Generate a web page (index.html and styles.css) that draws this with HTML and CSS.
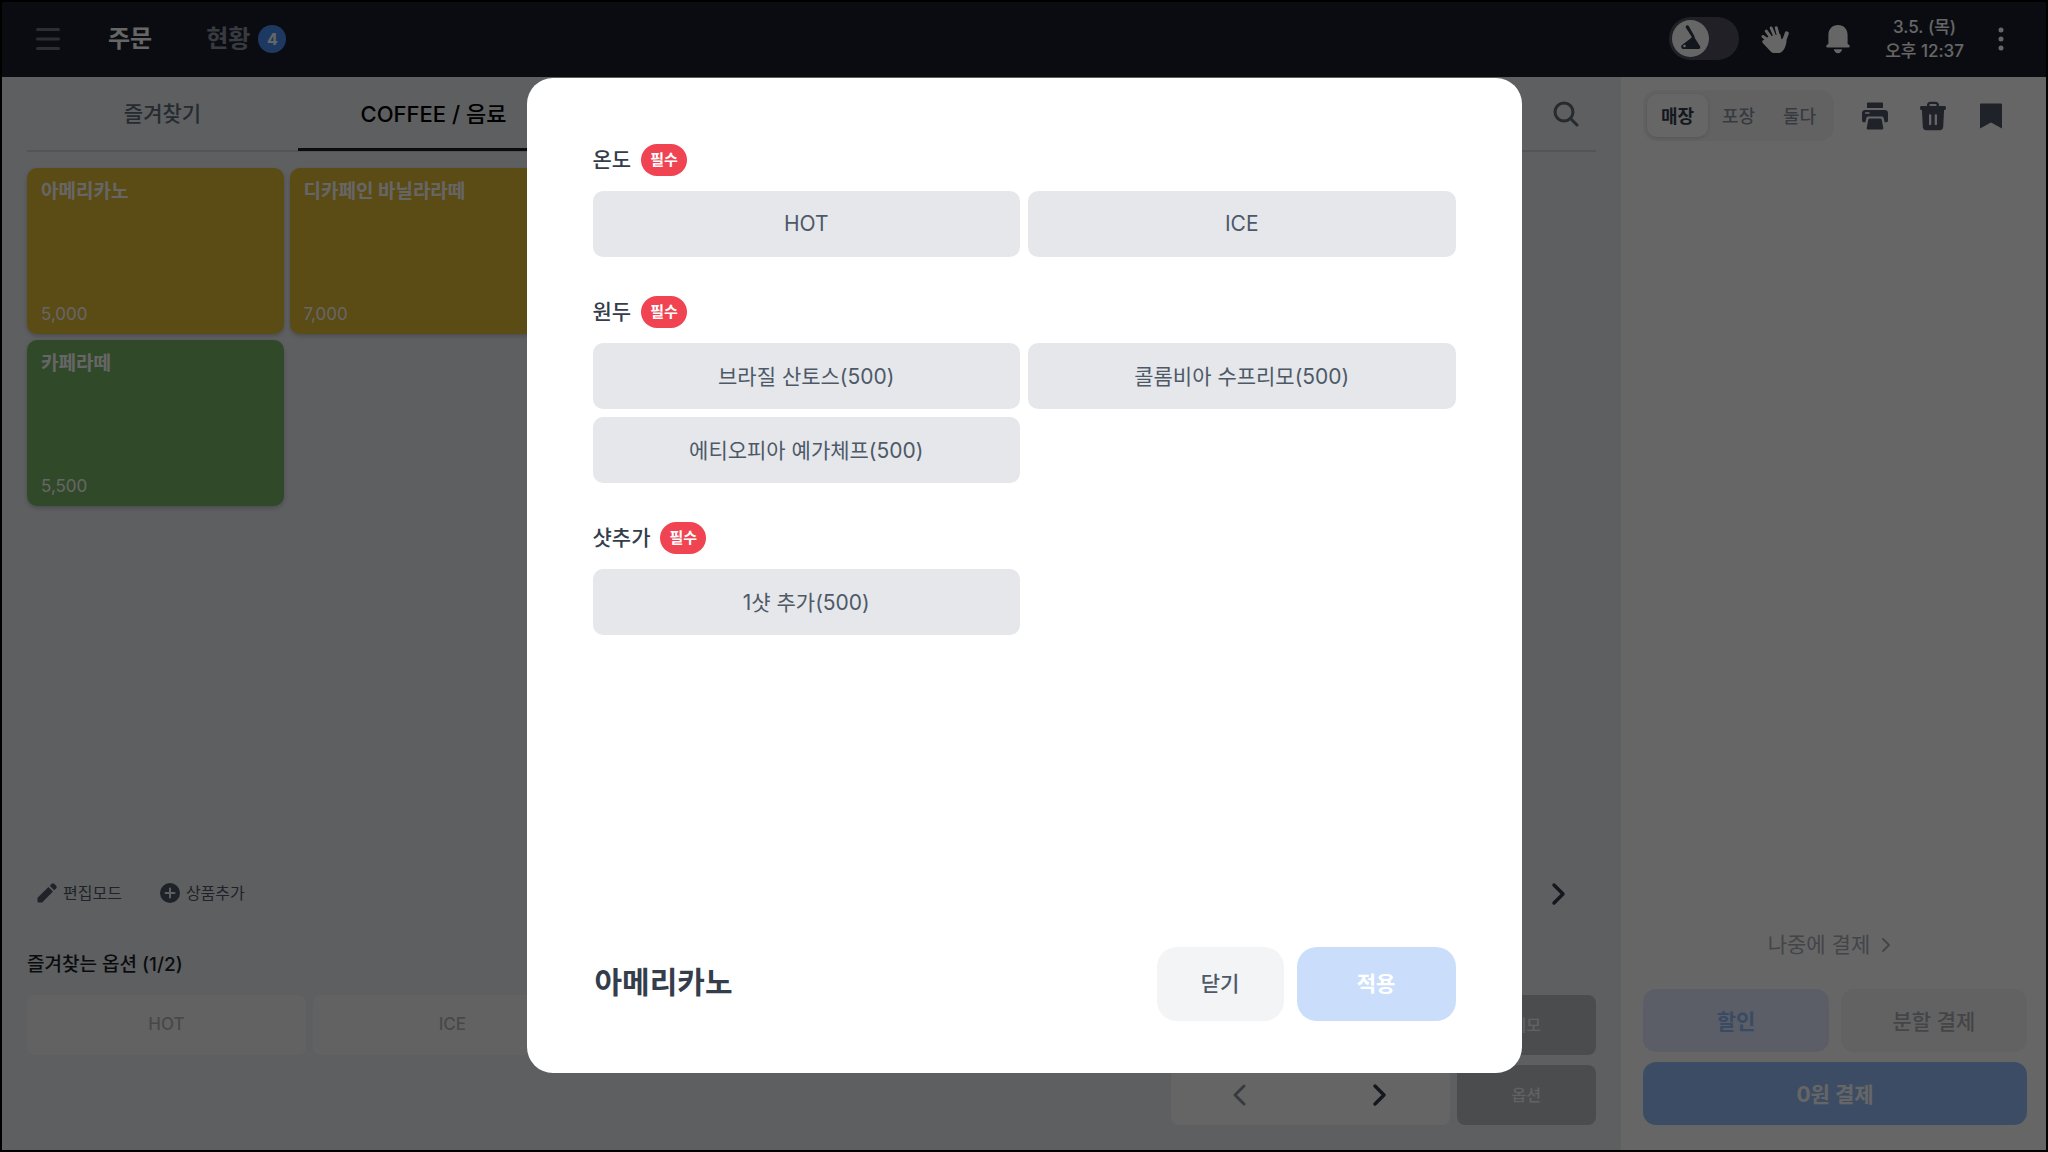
FILE: index.html
```html
<!DOCTYPE html>
<html lang="ko">
<head>
    <meta charset="UTF-8">
    <meta name="viewport" content="width=device-width, initial-scale=1.0">
    <title>주문</title>
    <link rel="stylesheet" href="styles.css">
</head>
<body>
    <div class="app">
        <header class="topbar">
            <button class="icon-button menu" aria-label="메뉴">
                <svg width="24" height="24" viewBox="0 0 24 24"><path d="M1.500 2.500h21M1.500 12h21M1.500 21.500h21" fill="none" stroke="currentColor" stroke-width="3" stroke-linecap="round"/></svg>
            </button>
            <nav class="main-nav">
                <a href="#order" class="active">주문</a>
                <a href="#status">현황 <span class="count">4</span></a>
            </nav>
            <div class="topbar-right">
                <label class="toggle">
                    <input type="checkbox" aria-label="단말기 연결">
                    <span class="knob">
                        <svg width="37" height="37" viewBox="0 0 37 37"><path d="M14.500 5.600c.9-.5 1.900-.2 2.400.6l5.400 9.700c.4.700.4 1.300.5 2l5.200 8.300c.6 1.100.3 2.800-1.200 2.800H11.600c-2.200 0-3.300-2.600-1.600-4l8.900-6.700c.7-.6.9-1.300.5-2.100l-5.500-8.400c-.5-.8-.2-1.700.6-2.200z" fill="#2f3a49"/><circle cx="12.500" cy="26" r="1.300" fill="#fff"/></svg>
                    </span>
                </label>
                <button class="icon-button hand" aria-label="직원 호출">
                    <svg width="28" height="28" viewBox="0 0 28 28"><g fill="none" stroke="currentColor" stroke-linecap="round"><path d="M9 17L2 11.500M11 14L5.300 6.200M14.500 13L10.200 3M18 13L15.300 2.800" stroke-width="3"/><path d="M22.500 17.500L25.800 8.300" stroke-width="4"/></g><path d="M2.800 14.600l5-3 11.400-2.500 1.300 5.200 4.300-2.300.7 4.800c-.6 3.500-1.300 6.300-3.600 9-3.100 3.500-8.300 3.800-12 .9L2 18.300c-1.900-1.800-.2-4.100 1.800-3.200z" fill="currentColor"/></svg>
                </button>
                <button class="icon-button bell" aria-label="알림">
                    <svg width="26" height="30" viewBox="0 0 26 30"><path d="M13 1c5.600 0 9.600 4.200 9.600 9.700v9l1.500 1.200c1.200 1 .8 2.600-.7 2.600H2.600c-1.500 0-1.900-1.600-.7-2.600l1.500-1.200v-9C3.400 5.200 7.400 1 13 1zM8.800 25.200h8.400c-.5 2.300-2 4-4.200 4s-3.700-1.700-4.200-4z" fill="currentColor"/></svg>
                </button>
                <time class="clock">3.5. (목)<br>오후 12:37</time>
                <button class="icon-button more" aria-label="더보기">
                    <svg width="6" height="24" viewBox="0 0 6 24"><path d="M3 3v0M3 12v0M3 21v0" stroke="currentColor" stroke-width="5" stroke-linecap="round"/></svg>
                </button>
            </div>
        </header>

        <main class="main">
            <section class="catalog">
                <div class="tabs">
                    <button class="tab">즐겨찾기</button>
                    <button class="tab active">COFFEE / 음료</button>
                    <button class="icon-button search" aria-label="검색">
                        <svg width="26" height="26" viewBox="0 0 26 26"><g fill="none" stroke="currentColor" stroke-width="3" stroke-linecap="round"><circle cx="11" cy="11" r="9"/><path d="M17.800 17.800L24 24"/></g></svg>
                    </button>
                </div>

                <div class="products">
                    <button class="product yellow"><strong>아메리카노</strong><span>5,000</span></button>
                    <button class="product yellow"><strong>디카페인 바닐라라떼</strong><span>7,000</span></button>
                    <button class="product green"><strong>카페라떼</strong><span>5,500</span></button>
                </div>

                <div class="toolbar">
                    <button class="tool">
                        <svg width="20" height="20" viewBox="2 2 20 20"><path d="M2.500 16.800V20.500c0 .6.4 1 1 1h3.700L18 10.600 13.400 6 2.500 16.800zM21.200 7.300c.7-.7.700-1.800 0-2.500l-2-2c-.7-.7-1.800-.7-2.500 0L14.700 4.800l4.500 4.500 2-2z" fill="currentColor"/></svg>
                        편집모드
                    </button>
                    <button class="tool">
                        <svg width="20" height="20" viewBox="0 0 20 20"><circle cx="10" cy="10" r="10" fill="currentColor"/><path d="M10 5.500v9M5.500 10h9" stroke="#ebedf1" stroke-width="2" stroke-linecap="round"/></svg>
                        상품추가
                    </button>
                    <button class="icon-button next" aria-label="다음 상품">
                        <svg width="16" height="24" viewBox="0 0 16 24"><path d="M3 3l9 9-9 9" fill="none" stroke="currentColor" stroke-width="3.500" stroke-linecap="round" stroke-linejoin="round"/></svg>
                    </button>
                </div>

                <h2 class="favorites-title">즐겨찾는 옵션 (1/2)</h2>
                <div class="favorites">
                    <button class="favorite" disabled>HOT</button>
                    <button class="favorite" disabled>ICE</button>
                    <button class="extra memo" disabled>메모</button>
                    <div class="pager">
                        <button class="icon-button prev" aria-label="이전 옵션" disabled>
                            <svg width="16" height="24" viewBox="0 0 16 24"><path d="M12 3l-9 9 9 9" fill="none" stroke="currentColor" stroke-width="3" stroke-linecap="round" stroke-linejoin="round"/></svg>
                        </button>
                        <button class="icon-button" aria-label="다음 옵션">
                            <svg width="16" height="24" viewBox="0 0 16 24"><path d="M3 3l9 9-9 9" fill="none" stroke="currentColor" stroke-width="3.500" stroke-linecap="round" stroke-linejoin="round"/></svg>
                        </button>
                    </div>
                    <button class="extra option" disabled>옵션</button>
                </div>
            </section>

            <aside class="cart">
                <div class="cart-head">
                    <div class="segment">
                        <button class="active">매장</button>
                        <button>포장</button>
                        <button>둘다</button>
                    </div>
                    <div class="cart-icons">
                        <button class="icon-button" aria-label="인쇄">
                            <svg width="28" height="28" viewBox="0 0 28 28"><path d="M6 1.500c0-.6.400-1 1-1h14c.6 0 1 .4 1 1V6H6V1.500zM4 8h20c1.700 0 3 1.300 3 3v7.500c0 1-.8 1.800-1.800 1.800h-1.600l-1-4.300c-.2-1-.9-1.600-1.900-1.600H7.300c-1 0-1.700.6-1.900 1.600l-1 4.300H2.800c-1 0-1.800-.8-1.800-1.800V11c0-1.700 1.300-3 3-3zM4 10.300v1.500h4.500v-1.500H4zM8.500 16.500h11c.6 0 1 .4 1.200.9l1.600 8.600c.1.800-.4 1.500-1.200 1.500H6.900c-.8 0-1.300-.7-1.200-1.500l1.600-8.600c.2-.5.600-.9 1.200-.9z" fill="currentColor" fill-rule="evenodd"/></svg>
                        </button>
                        <button class="icon-button" aria-label="삭제">
                            <svg width="28" height="30" viewBox="0 0 28 30"><path d="M8 5V4c0-2 1.400-3.300 3.300-3.300h5.400C18.600.7 20 2 20 4v1h5.500c.8 0 1.400.6 1.400 1.300v1.400c0 .7-.6 1.300-1.400 1.300h-.4l-.9 17c-.1 1.800-1.500 3.200-3.300 3.200H7.100c-1.800 0-3.200-1.400-3.300-3.200L2.900 9h-.4C1.700 9 1.100 8.400 1.100 7.700V6.300C1.100 5.600 1.700 5 2.500 5H8zm2.500 0h7V4c0-.6-.4-1-1-1h-5c-.6 0-1 .4-1 1v1zM10 14.500V23c0 .7.400 1.200 1.100 1.200s1.200-.5 1.200-1.200v-8.500c0-.7-.5-1.200-1.200-1.200s-1.100.5-1.100 1.200zm5.700 0V23c0 .7.500 1.200 1.200 1.200S18 23.700 18 23v-8.500c0-.7-.4-1.200-1.100-1.200s-1.200.5-1.200 1.200z" fill="currentColor" fill-rule="evenodd"/></svg>
                        </button>
                        <button class="icon-button" aria-label="보관">
                            <svg width="28" height="26" viewBox="0 0 28 26"><path d="M3 1.500c0-.6.400-1 1-1h20c.6 0 1 .4 1 1V25.500l-11-6-11 6V1.500z" fill="currentColor"/></svg>
                        </button>
                    </div>
                </div>

                <button class="pay-later" disabled>
                    나중에 결제
                    <svg width="12" height="18" viewBox="0 0 12 18"><path d="M3 3l6 6-6 6" fill="none" stroke="currentColor" stroke-width="2" stroke-linecap="round" stroke-linejoin="round"/></svg>
                </button>
                <div class="pay-buttons">
                    <button class="discount" disabled>할인</button>
                    <button class="split" disabled>분할 결제</button>
                    <button class="pay" disabled>0원 결제</button>
                </div>
            </aside>
        </main>
    </div>

    <div class="overlay">
        <div class="modal" role="dialog" aria-modal="true" aria-labelledby="modalTitle">
            <div class="option-groups">
                <section class="option-group">
                    <h3>온도 <span class="required">필수</span></h3>
                    <div class="choices">
                        <button>HOT</button>
                        <button>ICE</button>
                    </div>
                </section>
                <section class="option-group">
                    <h3>원두 <span class="required">필수</span></h3>
                    <div class="choices">
                        <button>브라질 산토스(500)</button>
                        <button>콜롬비아 수프리모(500)</button>
                        <button>에티오피아 예가체프(500)</button>
                    </div>
                </section>
                <section class="option-group">
                    <h3>샷추가 <span class="required">필수</span></h3>
                    <div class="choices">
                        <button>1샷 추가(500)</button>
                    </div>
                </section>
            </div>
            <footer class="modal-footer">
                <h2 id="modalTitle">아메리카노</h2>
                <button class="close">닫기</button>
                <button class="apply" disabled>적용</button>
            </footer>
        </div>
    </div>
</body>
</html>
```
FILE: styles.css
```css
* {
    box-sizing: border-box;
}
body {
    margin: 0;
    font-family: Inter, "Noto Sans CJK KR", sans-serif;
    color: #333d4b;
    background: #000;
}
button {
    margin: 0;
    padding: 0 0 2px;
    border: none;
    background: none;
    font-family: inherit;
    font-size: 21px;
    color: inherit;
    cursor: pointer;
}
h2, h3 {
    margin: 0;
}
svg {
    display: block;
}
.icon-button {
    display: flex;
    align-items: center;
    justify-content: center;
    padding: 0;
}
.app {
    display: flex;
    flex-direction: column;
    min-height: 100vh;
    border: 2px solid #000;
}

/* Top bar */
.topbar {
    display: flex;
    align-items: center;
    height: 75px;
    padding: 0 42px 2px 34px;
    background: #1b1f2b;
    color: #fff;
}
.menu {
    color: #6b7684;
}
.main-nav {
    display: flex;
    gap: 54px;
    margin-left: 48px;
}
.main-nav a {
    display: flex;
    align-items: center;
    gap: 8px;
    color: #8b95a1;
    font-size: 24px;
    line-height: 32px;
    font-weight: 700;
    text-decoration: none;
}
.main-nav a.active {
    color: #fff;
}
.count {
    width: 28px;
    height: 28px;
    border-radius: 50%;
    background: #4a90f5;
    color: #fff;
    font-size: 16px;
    line-height: 28px;
    text-align: center;
}
.topbar-right {
    display: flex;
    align-items: center;
    margin-left: auto;
}
.toggle {
    position: relative;
    display: block;
    width: 70px;
    height: 43px;
}
.toggle input {
    appearance: none;
    display: block;
    width: 100%;
    height: 100%;
    margin: 0;
    border-radius: 22px;
    background: #51525f;
}
.knob {
    position: absolute;
    top: 3px;
    left: 3px;
    border-radius: 50%;
    background: #fff;
}
.hand {
    margin-left: 22px;
}
.bell {
    margin-left: 36px;
}
.clock {
    margin-left: 34px;
    font-size: 17px;
    line-height: 24px;
    font-weight: 500;
    text-align: center;
}
.more {
    margin-left: 34px;
}

/* Product list */
.main {
    display: flex;
    flex: 1;
}
.catalog {
    display: flex;
    flex: 1;
    flex-direction: column;
    padding: 0 25px 25px;
    background: #ebedf1;
}
.tabs {
    display: flex;
    height: 75px;
    border-bottom: 2px solid #ced2d8;
}
.tab {
    width: 271px;
    margin-bottom: -1px;
    border-bottom: 3px solid transparent;
    color: #5f6b79;
    font-weight: 500;
}
.tab.active {
    border-color: #191f28;
    color: #000;
    font-size: 22px;
}
.search {
    width: 60px;
    margin-left: auto;
    color: #5f6b79;
}
.products {
    display: grid;
    grid-template-columns: repeat(6, 1fr);
    grid-auto-rows: 166px;
    gap: 6px;
    margin-top: 16px;
}
.products .green {
    grid-column: 1;
}
.product {
    display: flex;
    flex-direction: column;
    justify-content: space-between;
    padding: 12px 14px 10px;
    border-radius: 10px;
    box-shadow: 0 2px 4px rgba(0, 0, 0, 0.2);
    color: #fff;
    text-align: left;
}
.product strong {
    font-size: 19px;
    line-height: 24px;
}
.product span {
    font-size: 17px;
    line-height: 20px;
}
.yellow {
    background: #e4bb34;
}
.green {
    background: #78b666;
}
.toolbar {
    display: flex;
    align-items: center;
    gap: 38px;
    margin-top: auto;
    padding: 0 29px 0 10px;
}
.tool {
    display: flex;
    align-items: center;
    gap: 6px;
    color: #4e5968;
    font-size: 16px;
    line-height: 24px;
}
.next {
    margin-left: auto;
}
.favorites-title {
    margin-top: 44px;
    color: #191f28;
    font-size: 19px;
    line-height: 28px;
    font-weight: 500;
}
.favorites {
    display: grid;
    grid-template-columns: repeat(5, 2fr) 1fr;
    grid-auto-rows: 60px;
    gap: 10px 7px;
    margin-top: 16px;
}
.favorite, .extra, .pager {
    border-radius: 8px;
}
.favorite {
    background: #f5f5f5;
    color: #b0b5bb;
    font-size: 17px;
    font-weight: 500;
}
.extra {
    grid-column: 6;
    background: #bcbec2;
    color: #f2f4f6;
    font-size: 16px;
    font-weight: 500;
}
.pager {
    display: flex;
    grid-column: 5;
    background: #fdfdfd;
}
.pager button {
    flex: 1;
}
.pager .prev {
    color: #8b95a1;
}

/* Cart */
.cart {
    display: flex;
    flex-direction: column;
    width: 425px;
    padding: 13px 19px 25px 22px;
    background: #fff;
}
.cart-head {
    display: flex;
    align-items: center;
    justify-content: space-between;
    padding-right: 22px;
}
.segment {
    display: flex;
    padding: 4px;
    border-radius: 14px;
    background: #f6f6f7;
}
.segment button {
    width: 61px;
    height: 43px;
    border-radius: 10px;
    color: #8b95a1;
    font-size: 18px;
    font-weight: 500;
}
.segment .active {
    background: #fff;
    box-shadow: 0 1px 4px rgba(0, 0, 0, 0.15);
    color: #333d4b;
    font-weight: 700;
}
.cart-icons {
    display: flex;
    align-items: center;
    gap: 30px;
    color: #4e5968;
}
.pay-later {
    display: flex;
    align-items: center;
    align-self: center;
    gap: 10px;
    margin-top: auto;
    padding: 0 10px 0 0;
    color: #a9adb3;
    line-height: 30px;
}
.pay-buttons {
    display: grid;
    grid-template-columns: 1fr 1fr;
    grid-auto-rows: 63px;
    gap: 10px 12px;
    margin-top: 29px;
}
.pay-buttons button {
    border-radius: 13px;
    font-weight: 700;
}
.pay-buttons .discount {
    background: #e4eaff;
    color: #8fbcf8;
}
.pay-buttons .split {
    background: #f5f5f5;
    color: #a9adb3;
    font-weight: 500;
}
.pay-buttons .pay {
    grid-column: 1 / 3;
    background: #94bffa;
    color: #fff;
}

/* Option dialog */
.overlay {
    position: fixed;
    inset: 0;
    display: flex;
    align-items: center;
    justify-content: center;
    padding-bottom: 1px;
    background: rgba(0, 0, 0, 0.6);
}
.modal {
    display: flex;
    flex-direction: column;
    width: 90vw;
    max-width: 995px;
    height: 90vh;
    max-height: 995px;
    padding: 66px 66px 52px;
    border-radius: 26px;
    background: #fff;
}
.option-groups {
    display: flex;
    flex: 1;
    flex-direction: column;
    gap: 39px;
}
.option-group h3 {
    display: flex;
    align-items: center;
    gap: 10px;
    margin-bottom: 15px;
    font-size: 21px;
    line-height: 32px;
    font-weight: 500;
}
.required {
    padding: 0 9px;
    border-radius: 16px;
    background: #f04452;
    color: #fff;
    font-size: 15px;
    font-weight: 700;
}
.choices {
    display: grid;
    grid-template-columns: 1fr 1fr;
    grid-auto-rows: 66px;
    gap: 8px;
}
.choices button {
    border-radius: 10px;
    background: #e5e7eb;
    color: #4e5968;
}
.modal-footer {
    display: flex;
    align-items: center;
    gap: 13px;
}
.modal-footer h2 {
    flex: 1;
    padding: 0 2px 4px;
    font-size: 30px;
    line-height: 40px;
    font-weight: 700;
}
.modal-footer button {
    height: 74px;
    padding-bottom: 4px;
    border-radius: 20px;
}
.close {
    width: 127px;
    background: #f2f4f6;
    color: #4e5968;
    font-weight: 500;
}
.apply {
    width: 159px;
    background: #cadefc;
    color: #fff;
    font-weight: 700;
}
```
